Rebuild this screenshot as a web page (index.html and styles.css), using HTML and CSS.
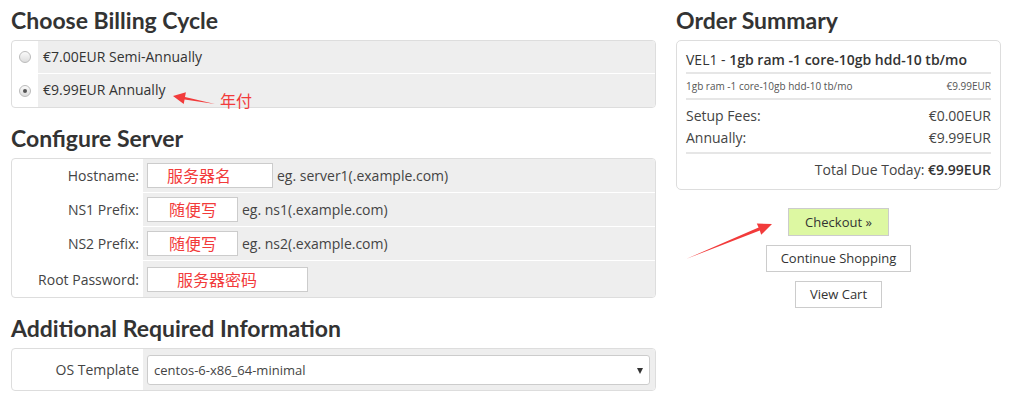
FILE: index.html
```html
<!DOCTYPE html>
<html lang="en">
<head>
    <meta charset="UTF-8">
    <title>Configure</title>
    <link rel="stylesheet" href="styles.css">
</head>
<body>
    <div class="page">
        <div class="main">
            <h2>Choose Billing Cycle</h2>
            <div class="panel billing">
                <div class="cycle">
                    <div class="pick"><span class="radio"></span></div>
                    <div class="cycle-text">€7.00EUR Semi-Annually</div>
                </div>
                <div class="cycle">
                    <div class="pick"><span class="radio on"></span></div>
                    <div class="cycle-text">€9.99EUR Annually</div>
                </div>
            </div>

            <h2>Configure Server</h2>
            <div class="panel fields">
                <div class="field">
                    <label>Hostname:</label>
                    <div class="value"><span class="input w-host">服务器名</span><span class="hint">eg. server1(.example.com)</span></div>
                </div>
                <div class="field">
                    <label>NS1 Prefix:</label>
                    <div class="value"><span class="input w-ns">随便写</span><span class="hint">eg. ns1(.example.com)</span></div>
                </div>
                <div class="field">
                    <label>NS2 Prefix:</label>
                    <div class="value"><span class="input w-ns">随便写</span><span class="hint">eg. ns2(.example.com)</span></div>
                </div>
                <div class="field last">
                    <label>Root Password:</label>
                    <div class="value"><span class="input w-pass">服务器密码</span></div>
                </div>
            </div>

            <h2>Additional Required Information</h2>
            <div class="panel fields">
                <div class="field os">
                    <label>OS Template</label>
                    <div class="value"><div class="select">centos-6-x86_64-minimal<span class="caret"></span></div></div>
                </div>
            </div>
        </div>

        <div class="side">
            <h2>Order Summary</h2>
            <div class="summary">
                <div class="sum-title">VEL1 - <b>1gb ram -1 core-10gb hdd-10 tb/mo</b></div>
                <div class="sum-item"><span>1gb ram -1 core-10gb hdd-10 tb/mo</span><span>€9.99EUR</span></div>
                <div class="sum-fees">
                    <div class="line"><span>Setup Fees:</span><span>€0.00EUR</span></div>
                    <div class="line"><span>Annually:</span><span>€9.99EUR</span></div>
                </div>
                <div class="sum-total">Total Due Today: <b>€9.99EUR</b></div>
            </div>
            <div class="actions">
                <a class="btn checkout">Checkout »</a>
                <a class="btn">Continue Shopping</a>
                <a class="btn">View Cart</a>
            </div>
        </div>
    </div>

    <!-- red notes drawn on top of the screenshot -->
    <svg class="notes" width="1024" height="393" viewBox="0 0 1024 393">
        <polygon points="173,96 185.9,92.3 185,96.9 215,104 184.6,99.5 183.7,104.1" fill="#f23b3b"/>
        <polygon points="772,224 756.8,223.6 758.6,227.6 686,259 759.8,230.6 761.2,234.8" fill="#f23b3b"/>
    </svg>
    <span class="note">年付</span>
</body>
</html>
```

FILE: styles.css
```css
body {
    margin: 0;
    font-family: "Open Sans", sans-serif;
    font-size: 14px;
    color: #333;
    background: #fff;
    position: relative;
}
.page {
    display: flex;
    gap: 20px;
    padding-left: 11px;
}
.main {
    width: 645px;
}
.side {
    width: 325px;
}
h2 {
    font-family: Lato, sans-serif;
    font-weight: 700;
    font-size: 23px;
    line-height: 30px;
    margin: 5px 0 5px;
    color: #333;
}
.main h2 + .panel + h2 {
    margin-top: 15px;
}
.panel {
    border: 1px solid #ddd;
    border-radius: 4px;
    overflow: hidden;
    background: #fff;
}
.cycle {
    display: flex;
    height: 32px;
}
.cycle + .cycle {
    border-top: 1px solid #fff;
    height: 33px;
}
.pick {
    width: 26px;
    display: flex;
    align-items: center;
    justify-content: center;
}
.radio {
    width: 10px;
    height: 10px;
    border: 1px solid #bbb;
    border-radius: 50%;
    background: linear-gradient(#fafafa, #ddd);
    position: relative;
}
.radio.on::after {
    content: "";
    position: absolute;
    left: 3px;
    top: 3px;
    width: 4px;
    height: 4px;
    border-radius: 50%;
    background: #555;
}
.cycle-text {
    flex: 1;
    background: #eee;
    display: flex;
    align-items: center;
    padding-left: 5px;
    padding-bottom: 2px;
}
.field {
    display: flex;
    height: 33px;
    border-bottom: 1px solid #fff;
}
.field.last {
    height: 36px;
    border-bottom: 0;
}
.field label {
    width: 127px;
    padding-right: 4px;
    text-align: right;
    display: flex;
    align-items: center;
    justify-content: flex-end;
    color: #444;
}
.value {
    flex: 1;
    background: #eee;
    display: flex;
    align-items: center;
    padding-left: 4px;
}
.input {
    box-sizing: border-box;
    height: 25px;
    border: 1px solid #ccc;
    background: #fff;
    font-family: "Noto Sans CJK SC", sans-serif;
    font-size: 16px;
    line-height: 23px;
    color: #f23b3b;
    padding-left: 19px;
}
.w-host { width: 126px; }
.w-ns { width: 91px; padding-left: 21px; }
.w-pass { width: 161px; padding-left: 29px; }
.hint {
    margin-left: 4px;
    color: #444;
}
.field.os {
    height: 41px;
    border-bottom: 0;
}
.select {
    box-sizing: border-box;
    width: 503px;
    height: 30px;
    border: 1px solid #ccc;
    border-radius: 3px;
    background: #fff;
    font-size: 13px;
    color: #444;
    display: flex;
    align-items: center;
    padding-left: 6px;
    position: relative;
}
.caret {
    position: absolute;
    right: 6px;
    top: 12px;
    border-left: 3px solid transparent;
    border-right: 3px solid transparent;
    border-top: 6px solid #333;
}
.summary {
    border: 1px solid #ddd;
    border-radius: 5px;
    padding: 0 9px;
}
.sum-title {
    padding: 9px 0 2px;
    line-height: 20px;
    border-bottom: 2px solid #e6e6e6;
    color: #333;
}
.sum-title b {
    font-weight: 600;
}
.sum-item {
    display: flex;
    justify-content: space-between;
    font-size: 10px;
    line-height: 14px;
    padding: 5px 0;
    color: #555;
    border-bottom: 2px solid #e6e6e6;
}
.sum-fees {
    padding: 5px 0 3px;
    border-bottom: 2px solid #e6e6e6;
}
.line {
    display: flex;
    justify-content: space-between;
    line-height: 22px;
    color: #444;
}
.sum-total {
    text-align: right;
    line-height: 20px;
    padding: 6px 0 9px;
    color: #444;
}
.sum-total b {
    font-weight: 600;
    color: #333;
}
.actions {
    display: flex;
    flex-direction: column;
    align-items: center;
    gap: 9px;
    margin-top: 18px;
}
.btn {
    display: block;
    height: 25px;
    line-height: 25px;
    padding: 0 14px;
    border: 1px solid #ccc;
    font-size: 13px;
    color: #333;
    background: #fff;
}
.btn.checkout {
    background: #ddf8a2;
    padding: 0 16px;
    height: 26px;
    line-height: 26px;
}
.notes {
    position: absolute;
    left: 0;
    top: 0;
}
.note {
    position: absolute;
    left: 220px;
    top: 88px;
    font-family: "Noto Sans CJK SC", sans-serif;
    font-size: 16px;
    color: #f23b3b;
}
```
